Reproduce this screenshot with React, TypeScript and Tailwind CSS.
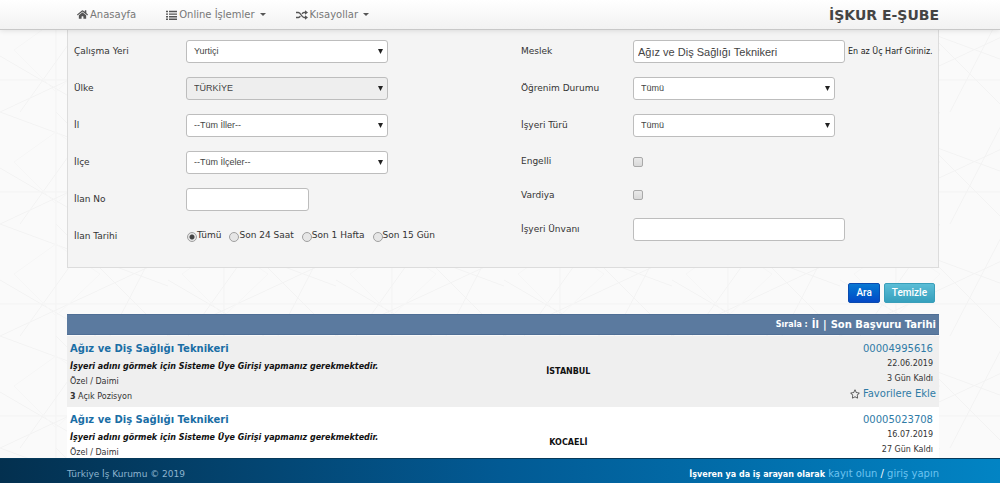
import { useState, type ReactNode } from "react";
import { FaHome, FaRegStar } from "react-icons/fa";

const fieldBorder = "h-[23px] rounded-[3px] border border-[#bdbdbd] bg-white font-['Liberation_Sans',sans-serif] text-[#444]";

function Backdrop() {
  return (
    <svg aria-hidden="true" className="pointer-events-none absolute inset-0 h-full w-full">
      <defs>
        <pattern id="mesh" width="168" height="112" patternUnits="userSpaceOnUse">
          <g fill="none" stroke="#f3f3f3" strokeWidth="1">
            <path d="M0 0 168 62M0 112 168 34M0 56 96 112M56 0 168 112M56 0 56 112M0 80H168M100 0 20 112M168 0 110 112" />
            <path d="M56 20 100 50 56 92 14 50Z" stroke="#f6f6f6" />
          </g>
        </pattern>
      </defs>
      <rect width="100%" height="100%" fill="url(#mesh)" />
    </svg>
  );
}

function ListIcon() {
  return (
    <svg aria-hidden="true" viewBox="0 0 11 10" className="h-[10px] w-[11px] fill-[#555]">
      <path d="M0 .8h2v1.4H0zM0 3.4h2v1.4H0zM0 6h2v1.4H0zM0 8.6h2v1.4H0zM3 .8h8v1.4H3zM3 3.4h8v1.4H3zM3 6h8v1.4H3zM3 8.6h8v1.4H3z" />
    </svg>
  );
}

function ShuffleIcon() {
  return (
    <svg aria-hidden="true" viewBox="0 0 12 10" className="h-[10px] w-3">
      <path d="M0 2.5H2.4C5 2.5 5.4 7.5 8 7.5H9.5M0 7.5H2.4C3.3 7.5 3.9 6.9 4.3 6.1M6 3.9C6.5 3.1 7 2.5 8 2.5H9.5" fill="none" stroke="#555" strokeWidth="1.4" />
      <path d="M9 0.2 12 2.5 9 4.8ZM9 5.2 12 7.5 9 9.8Z" fill="#555" />
    </svg>
  );
}

function Caret() {
  return (
    <svg aria-hidden="true" viewBox="0 0 6 3" className="ml-[3px] h-[3px] w-[6px] fill-[#555]">
      <path d="M0 0H6L3 3Z" />
    </svg>
  );
}

function Row({ id, label, height = "h-[37px]", children }: { id: string; label: string; height?: string; children: ReactNode }) {
  return (
    <div className={`flex items-center ${height}`}>
      <label htmlFor={id} className="w-28 shrink-0">
        {label}
      </label>
      {children}
    </div>
  );
}

function Select({ id, value, disabled }: { id: string; value: string; disabled?: boolean }) {
  return (
    <div className="relative w-[202px]">
      <select
        id={id}
        disabled={disabled}
        className={`${fieldBorder} block w-full appearance-none pl-[7px] pr-5 text-[9px] disabled:bg-[#eee] disabled:opacity-100`}
      >
        <option>{value}</option>
      </select>
      <svg aria-hidden="true" viewBox="0 0 5 5" className="pointer-events-none absolute right-[5px] top-[9px] h-[5px] w-[5px] fill-[#222]">
        <path d="M0 0H5L2.5 5Z" />
      </svg>
    </div>
  );
}

function Check({ id }: { id: string }) {
  return (
    <input
      id={id}
      type="checkbox"
      className="h-[10px] w-[10px] appearance-none rounded-[2px] border border-[#a9a9a9] bg-linear-to-b from-[#e9e9e9] to-[#d9d9d9] checked:bg-[#0a62c4]"
    />
  );
}

const dates = ["Tümü", "Son 24 Saat", "Son 1 Hafta", "Son 15 Gün"];

function DateChoice() {
  const [picked, setPicked] = useState(dates[0]);
  return (
    <div role="radiogroup" aria-label="İlan Tarihi" className="flex gap-2 pb-1 pl-px">
      {dates.map((d) => (
        <label key={d} className="flex items-end">
          <input
            type="radio"
            name="tarih"
            checked={picked === d}
            onChange={() => setPicked(d)}
            className="h-[10px] w-[10px] appearance-none rounded-full border border-[#a0a0a0] bg-[#e6e6e6] checked:bg-[radial-gradient(circle,#444_0_2px,#e6e6e6_3px)]"
          />
          <span className="leading-[14px]">{d}</span>
        </label>
      ))}
    </div>
  );
}

type Job = { no: string; city: string; date: string; left: string; open?: number; bg: string };

const jobs: Job[] = [
  { no: "00004995616", city: "İSTANBUL", date: "22.06.2019", left: "3 Gün Kaldı", open: 3, bg: "bg-[#efefef]" },
  { no: "00005023708", city: "KOCAELİ", date: "16.07.2019", left: "27 Gün Kaldı", bg: "bg-white" },
];

export default function App() {
  return (
    <div className="relative flex h-screen flex-col overflow-hidden bg-[#fafafa] font-['DejaVu_Sans',sans-serif] text-[10px] leading-[15px] text-[#333]">
      <Backdrop />
      <header className="relative z-10 flex h-[30px] shrink-0 items-center justify-between border-b border-[#c8c8c8] bg-linear-to-b from-white to-[#f2f2f2] pl-[77px] pr-[61px] shadow-[0_1px_5px_rgba(0,0,0,0.1)]">
        <nav className="flex items-center gap-[30px] text-[#777]">
          <a href="#anasayfa" className="flex items-center gap-[2px]">
            <FaHome className="h-[11px] w-[11px] text-[#555]" />
            Anasayfa
          </a>
          <a href="#online" className="flex items-center gap-[2px]">
            <ListIcon />
            Online İşlemler
            <Caret />
          </a>
          <a href="#kisayollar" className="flex items-center gap-[2px]">
            <ShuffleIcon />
            Kısayollar
            <Caret />
          </a>
        </nav>
        <h1 className="text-sm font-bold text-[#444]">İŞKUR E-ŞUBE</h1>
      </header>

      <main className="relative min-h-0 flex-1 overflow-y-auto pl-[67px] pr-[61px] [scrollbar-width:none]">
        <form onSubmit={(e) => e.preventDefault()}>
          <div className="flex border border-t-0 border-[#dcdcdc] bg-[#f4f4f4] pb-3 pl-[6px] pt-[3px] text-[9px]">
            <div className="w-[447px] shrink-0">
              <Row id="yer" label="Çalışma Yeri">
                <Select id="yer" value="Yurtiçi" />
              </Row>
              <Row id="ulke" label="Ülke">
                <Select id="ulke" value="TÜRKİYE" disabled />
              </Row>
              <Row id="il" label="İl">
                <Select id="il" value="--Tüm İller--" />
              </Row>
              <Row id="ilce" label="İlçe">
                <Select id="ilce" value="--Tüm İlçeler--" />
              </Row>
              <Row id="ilanno" label="İlan No">
                <input id="ilanno" type="text" className={`${fieldBorder} w-[123px] px-1 text-[11px]`} />
              </Row>
              <div className="flex h-[37px] items-center">
                <span className="w-28 shrink-0">İlan Tarihi</span>
                <DateChoice />
              </div>
            </div>
            <div className="min-w-0 flex-1">
              <Row id="meslek" label="Meslek">
                <input id="meslek" type="text" defaultValue="Ağız ve Diş Sağlığı Teknikeri" className={`${fieldBorder} w-[212px] px-1 text-[11px]`} />
                <span className="ml-[3px] whitespace-nowrap text-[8px] text-[#222]">En az Üç Harf Giriniz.</span>
              </Row>
              <Row id="ogrenim" label="Öğrenim Durumu">
                <Select id="ogrenim" value="Tümü" />
              </Row>
              <Row id="isyeri" label="İşyeri Türü">
                <Select id="isyeri" value="Tümü" />
              </Row>
              <Row id="engelli" label="Engelli" height="h-[35px]">
                <Check id="engelli" />
              </Row>
              <Row id="vardiya" label="Vardiya" height="h-8">
                <Check id="vardiya" />
              </Row>
              <Row id="unvan" label="İşyeri Ünvanı">
                <input id="unvan" type="text" className={`${fieldBorder} w-[212px] px-1 text-[11px]`} />
              </Row>
            </div>
          </div>
          <div className="flex justify-end gap-1 pb-[11px] pr-1 pt-[15px] font-['Roboto',sans-serif] text-[10px] font-medium text-white [text-shadow:0_-1px_0_rgba(0,0,0,0.25)]">
            <button type="submit" className="h-5 rounded-[2px] border border-[#0a4bb0] bg-linear-to-b from-[#0b78d2] to-[#0548c6] px-[7px] leading-[18px]">
              Ara
            </button>
            <button type="reset" className="h-5 rounded-[2px] border border-[#3a9fba] bg-linear-to-b from-[#5bbdd6] to-[#35a0bd] px-[7px] leading-[18px]">
              Temizle
            </button>
          </div>
        </form>

        <div className="mb-px flex h-[21px] items-center justify-end gap-1 border-y border-[#506f95] bg-[#5b7a9f] pr-[3px] font-bold text-white">
          <span className="text-[8px]">Sırala :</span>
          <a href="#il">İl</a>
          <span>|</span>
          <a href="#tarih">Son Başvuru Tarihi</a>
        </div>
        <table className="w-full table-fixed border-collapse text-[8px]">
          <tbody>
            {jobs.map((j) => (
              <tr key={j.no} className={`h-[71px] align-top ${j.bg}`}>
                <td className="w-[45%] pl-[3px] pt-[5px]">
                  <a href={`#${j.no}`} className="block pb-[3px] text-[10px] font-bold text-[#1a6ea5]">
                    Ağız ve Diş Sağlığı Teknikeri
                  </a>
                  <p className="font-bold italic text-[#111]">İşyeri adını görmek için Sisteme Üye Girişi yapmanız gerekmektedir.</p>
                  <p>Özel / Daimi</p>
                  {j.open !== undefined && (
                    <p>
                      <b>{j.open}</b> Açık Pozisyon
                    </p>
                  )}
                </td>
                <td className="align-middle text-center font-bold text-[#111]">{j.city}</td>
                <td className="w-[30%] pr-[3px] pt-[5px] text-right">
                  <a href={`#${j.no}`} className="block pr-[3px] text-[10px] text-[#2f7ba6]">
                    {j.no}
                  </a>
                  <p className="pr-[3px]">{j.date}</p>
                  <p className="pr-[3px]">{j.left}</p>
                  {j.open !== undefined && (
                    <a href="#favori" className="flex items-center justify-end gap-[3px] text-[10px] text-[#2f7ba6]">
                      <FaRegStar className="h-[10px] w-[10px] text-[#555]" />
                      Favorilere Ekle
                    </a>
                  )}
                </td>
              </tr>
            ))}
          </tbody>
        </table>
      </main>

      <footer className="relative flex shrink-0 items-center justify-between border-t border-[#06395a] bg-linear-to-r from-[#03304f] via-[#025a94] to-[#0284c4] pb-px pl-[67px] pr-[61px] pt-[7px]">
        <span className="text-[9px] text-[#8db4cf]">Türkiye İş Kurumu © 2019</span>
        <p className="text-white">
          <b className="text-[8px]">İşveren ya da iş arayan olarak</b>{" "}
          <a href="#kayit" className="text-[#6cc3f0]">
            kayıt olun
          </a>{" "}
          /{" "}
          <a href="#giris" className="text-[#6cc3f0]">
            giriş yapın
          </a>
        </p>
      </footer>
    </div>
  );
}
